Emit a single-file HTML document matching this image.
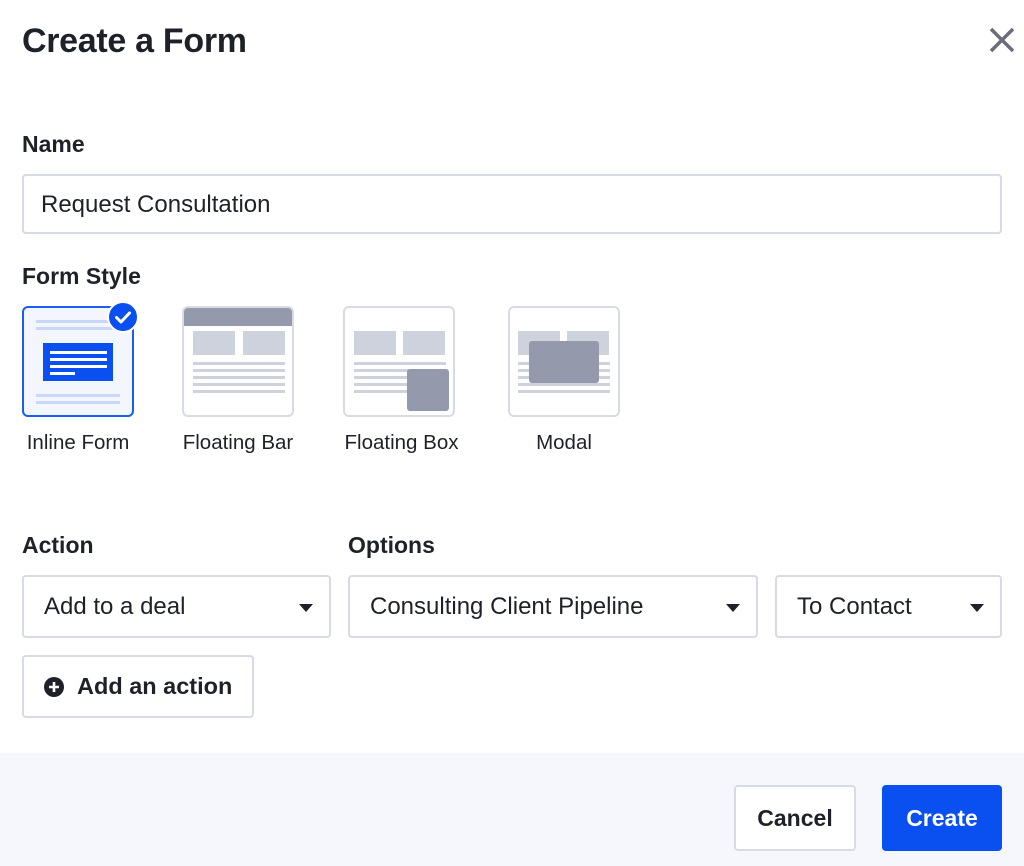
<!DOCTYPE html>
<html><head><meta charset="utf-8"><style>
*{box-sizing:border-box;margin:0;padding:0}
body{width:1024px;height:866px;background:#fff;font-family:"Liberation Sans",sans-serif;color:#1f2129;position:relative;overflow:hidden}
.a{position:absolute}
.lbl{font-weight:bold;font-size:23px;white-space:nowrap}
.box{border:2px solid #d8dbe6;border-radius:4px;background:#fff}
.sel{font-size:24px;display:flex;align-items:center;padding-left:20px;white-space:nowrap}
.tri{position:absolute;right:16px;top:27px;width:0;height:0;border-left:7px solid transparent;border-right:7px solid transparent;border-top:8px solid #1f2129}
.tl{font-size:20.5px;text-align:center;white-space:nowrap}
.g{position:absolute;background:#cdd2dd}
.d{position:absolute;background:#9499ac;border-radius:3px}
</style></head><body>
<div class="a" style="left:22px;top:22px;font-size:34px;font-weight:bold;letter-spacing:-0.3px">Create a Form</div>
<svg class="a" style="left:988px;top:26px" width="28" height="28" viewBox="0 0 28 28"><path d="M3 3L25 25M25 3L3 25" stroke="#6b6e78" stroke-width="3.5"/></svg>
<div class="a lbl" style="left:22px;top:131px">Name</div>
<div class="a box" style="left:22px;top:174px;width:980px;height:60px;font-size:24px;padding:15px 0 0 17px">Request Consultation</div>
<div class="a lbl" style="left:22px;top:263px">Form Style</div>

<!-- Inline -->
<div class="a" style="left:22px;top:306px;width:112px;height:111px;border:2px solid #1c5cf5;border-radius:6px;background:#f3f6fd"></div>
<div class="g" style="left:36px;top:320px;width:77px;height:3px;background:#c9d7f8"></div>
<div class="g" style="left:36px;top:327px;width:77px;height:3px;background:#c9d7f8"></div>
<div class="a" style="left:43px;top:343px;width:70px;height:38px;background:#0a4ff0"></div>
<div class="a" style="left:50px;top:351px;width:57px;height:3px;background:#fff"></div>
<div class="a" style="left:50px;top:358px;width:57px;height:3px;background:#fff"></div>
<div class="a" style="left:50px;top:365px;width:57px;height:3px;background:#fff"></div>
<div class="a" style="left:50px;top:372px;width:25px;height:3px;background:#fff"></div>
<div class="g" style="left:36px;top:394px;width:84px;height:3px;background:#c9d7f8"></div>
<div class="g" style="left:36px;top:401px;width:84px;height:3px;background:#c9d7f8"></div>
<svg class="a" style="left:107px;top:301px" width="32" height="32" viewBox="0 0 32 32"><circle cx="16" cy="16" r="15" fill="#0a4ff0" stroke="#fff" stroke-width="2"/><path d="M9.5 16.5l4.5 4.5 8.5-9" stroke="#fff" stroke-width="3" fill="none" stroke-linecap="round" stroke-linejoin="round"/></svg>
<div class="a tl" style="left:13px;top:431px;width:130px">Inline Form</div>

<!-- Floating bar -->
<div class="a" style="left:182px;top:306px;width:112px;height:111px;border:2px solid #d8dbe6;border-radius:6px;overflow:hidden"><div style="height:18px;background:#9499ac"></div></div>
<div class="g" style="left:193px;top:331px;width:42px;height:24px"></div>
<div class="g" style="left:243px;top:331px;width:42px;height:24px"></div>
<div class="g" style="left:193px;top:362px;width:92px;height:3px"></div>
<div class="g" style="left:193px;top:369px;width:92px;height:3px"></div>
<div class="g" style="left:193px;top:376px;width:92px;height:3px"></div>
<div class="g" style="left:193px;top:383px;width:92px;height:3px"></div>
<div class="g" style="left:193px;top:390px;width:92px;height:3px"></div>
<div class="a tl" style="left:173px;top:431px;width:130px">Floating Bar</div>

<!-- Floating box -->
<div class="a box" style="left:343px;top:306px;width:112px;height:111px;border-radius:6px"></div>
<div class="g" style="left:354px;top:331px;width:42px;height:24px"></div>
<div class="g" style="left:403px;top:331px;width:42px;height:24px"></div>
<div class="g" style="left:354px;top:362px;width:92px;height:3px"></div>
<div class="g" style="left:354px;top:369px;width:92px;height:3px"></div>
<div class="g" style="left:354px;top:376px;width:92px;height:3px"></div>
<div class="g" style="left:354px;top:383px;width:92px;height:3px"></div>
<div class="g" style="left:354px;top:390px;width:92px;height:3px"></div>
<div class="d" style="left:407px;top:369px;width:42px;height:42px"></div>
<div class="a tl" style="left:334px;top:431px;width:135px">Floating Box</div>

<!-- Modal -->
<div class="a box" style="left:508px;top:306px;width:112px;height:111px;border-radius:6px"></div>
<div class="g" style="left:518px;top:331px;width:42px;height:24px"></div>
<div class="g" style="left:567px;top:331px;width:42px;height:24px"></div>
<div class="g" style="left:518px;top:362px;width:92px;height:3px"></div>
<div class="g" style="left:518px;top:369px;width:92px;height:3px"></div>
<div class="g" style="left:518px;top:376px;width:92px;height:3px"></div>
<div class="g" style="left:518px;top:383px;width:92px;height:3px"></div>
<div class="g" style="left:518px;top:390px;width:92px;height:3px"></div>
<div class="d" style="left:529px;top:341px;width:70px;height:42px"></div>
<div class="a tl" style="left:499px;top:431px;width:130px">Modal</div>

<div class="a lbl" style="left:22px;top:532px">Action</div>
<div class="a lbl" style="left:348px;top:532px">Options</div>
<div class="a box sel" style="left:22px;top:575px;width:309px;height:63px">Add to a deal<span class="tri"></span></div>
<div class="a box sel" style="left:348px;top:575px;width:410px;height:63px">Consulting Client Pipeline<span class="tri"></span></div>
<div class="a box sel" style="left:775px;top:575px;width:227px;height:63px">To Contact<span class="tri"></span></div>
<div class="a box" style="left:22px;top:655px;width:232px;height:63px;display:flex;align-items:center;padding-left:19px;font-size:23.5px;font-weight:bold;white-space:nowrap">
<svg width="22" height="22" viewBox="0 0 22 22" style="margin-right:12px;flex:none"><circle cx="11" cy="11" r="10" fill="#1f2129"/><path d="M11 6v10M6 11h10" stroke="#fff" stroke-width="2.6"/></svg>Add an action</div>

<div class="a" style="left:0;top:753px;width:1024px;height:113px;background:#f5f7fc"></div>
<div class="a box" style="left:734px;top:785px;width:122px;height:66px;display:flex;align-items:center;justify-content:center;font-size:23px;font-weight:bold">Cancel</div>
<div class="a" style="left:882px;top:785px;width:120px;height:66px;background:#0a4ff0;border-radius:4px;color:#fff;display:flex;align-items:center;justify-content:center;font-size:23px;font-weight:bold">Create</div>
</body></html>
